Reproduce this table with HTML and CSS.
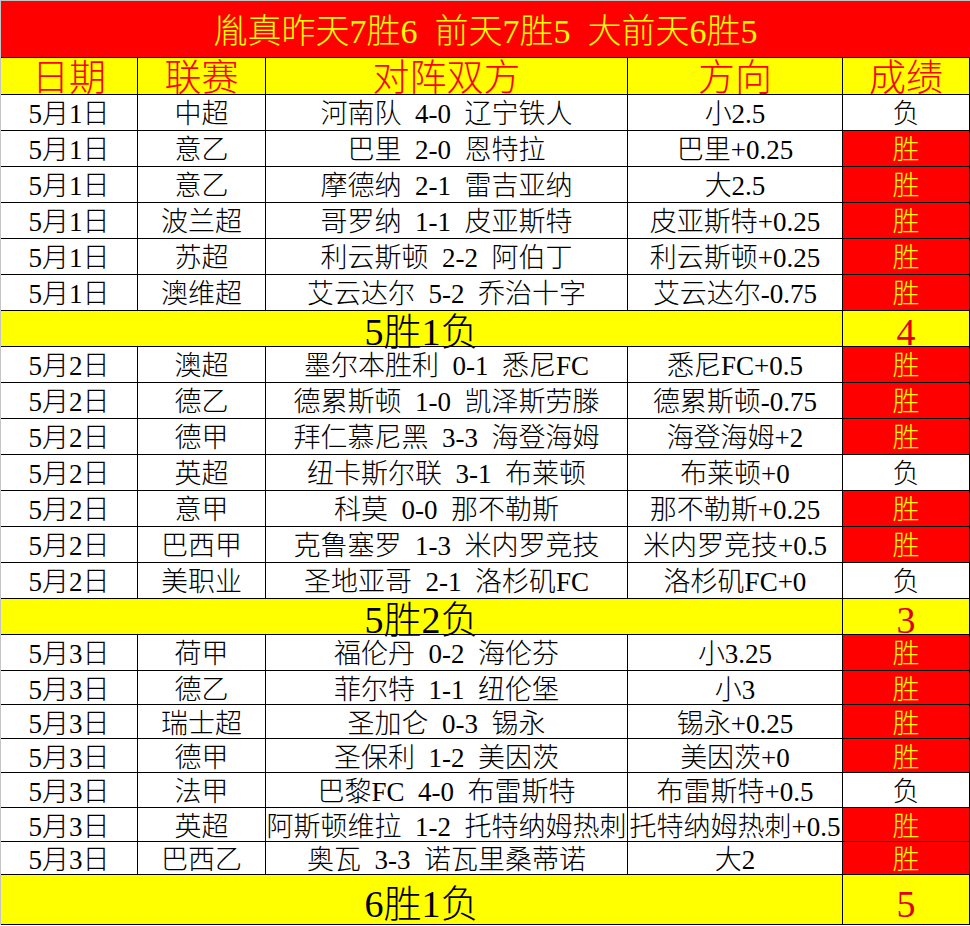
FILE: index.html
```html
<!DOCTYPE html>
<html lang="zh-CN">
<head>
<meta charset="utf-8">
<title>战绩</title>
<link rel="stylesheet" href="styles.css">
</head>
<body>
<div class="sheet">
  <div class="title">胤真昨天7胜6 前天7胜5 大前天6胜5</div>

  <div class="row head">
    <div class="cell">日期</div><div class="cell">联赛</div><div class="cell">对阵双方</div><div class="cell">方向</div><div class="cell">成绩</div>
  </div>

  <div class="row"><div class="cell">5月1日</div><div class="cell">中超</div><div class="cell">河南队 4-0 辽宁铁人</div><div class="cell">小2.5</div><div class="cell">负</div></div>
  <div class="row"><div class="cell">5月1日</div><div class="cell">意乙</div><div class="cell">巴里 2-0 恩特拉</div><div class="cell">巴里+0.25</div><div class="cell win">胜</div></div>
  <div class="row"><div class="cell">5月1日</div><div class="cell">意乙</div><div class="cell">摩德纳 2-1 雷吉亚纳</div><div class="cell">大2.5</div><div class="cell win">胜</div></div>
  <div class="row"><div class="cell">5月1日</div><div class="cell">波兰超</div><div class="cell">哥罗纳 1-1 皮亚斯特</div><div class="cell">皮亚斯特+0.25</div><div class="cell win">胜</div></div>
  <div class="row"><div class="cell">5月1日</div><div class="cell">苏超</div><div class="cell">利云斯顿 2-2 阿伯丁</div><div class="cell">利云斯顿+0.25</div><div class="cell win">胜</div></div>
  <div class="row"><div class="cell">5月1日</div><div class="cell">澳维超</div><div class="cell">艾云达尔 5-2 乔治十字</div><div class="cell">艾云达尔-0.75</div><div class="cell win">胜</div></div>
  <div class="row sum"><div class="cell span">5胜1负</div><div class="cell score">4</div></div>

  <div class="row"><div class="cell">5月2日</div><div class="cell">澳超</div><div class="cell">墨尔本胜利 0-1 悉尼FC</div><div class="cell">悉尼FC+0.5</div><div class="cell win">胜</div></div>
  <div class="row"><div class="cell">5月2日</div><div class="cell">德乙</div><div class="cell">德累斯顿 1-0 凯泽斯劳滕</div><div class="cell">德累斯顿-0.75</div><div class="cell win">胜</div></div>
  <div class="row"><div class="cell">5月2日</div><div class="cell">德甲</div><div class="cell">拜仁慕尼黑 3-3 海登海姆</div><div class="cell">海登海姆+2</div><div class="cell win">胜</div></div>
  <div class="row"><div class="cell">5月2日</div><div class="cell">英超</div><div class="cell">纽卡斯尔联 3-1 布莱顿</div><div class="cell">布莱顿+0</div><div class="cell">负</div></div>
  <div class="row"><div class="cell">5月2日</div><div class="cell">意甲</div><div class="cell">科莫 0-0 那不勒斯</div><div class="cell">那不勒斯+0.25</div><div class="cell win">胜</div></div>
  <div class="row"><div class="cell">5月2日</div><div class="cell">巴西甲</div><div class="cell">克鲁塞罗 1-3 米内罗竞技</div><div class="cell">米内罗竞技+0.5</div><div class="cell win">胜</div></div>
  <div class="row"><div class="cell">5月2日</div><div class="cell">美职业</div><div class="cell">圣地亚哥 2-1 洛杉矶FC</div><div class="cell">洛杉矶FC+0</div><div class="cell">负</div></div>
  <div class="row sum"><div class="cell span">5胜2负</div><div class="cell score">3</div></div>

  <div class="row"><div class="cell">5月3日</div><div class="cell">荷甲</div><div class="cell">福伦丹 0-2 海伦芬</div><div class="cell">小3.25</div><div class="cell win">胜</div></div>
  <div class="row h34"><div class="cell">5月3日</div><div class="cell">德乙</div><div class="cell">菲尔特 1-1 纽伦堡</div><div class="cell">小3</div><div class="cell win">胜</div></div>
  <div class="row h34"><div class="cell">5月3日</div><div class="cell">瑞士超</div><div class="cell">圣加仑 0-3 锡永</div><div class="cell">锡永+0.25</div><div class="cell win">胜</div></div>
  <div class="row h34"><div class="cell">5月3日</div><div class="cell">德甲</div><div class="cell">圣保利 1-2 美因茨</div><div class="cell">美因茨+0</div><div class="cell win">胜</div></div>
  <div class="row h35"><div class="cell">5月3日</div><div class="cell">法甲</div><div class="cell">巴黎FC 4-0 布雷斯特</div><div class="cell">布雷斯特+0.5</div><div class="cell">负</div></div>
  <div class="row h34"><div class="cell">5月3日</div><div class="cell">英超</div><div class="cell">阿斯顿维拉 1-2 托特纳姆热刺</div><div class="cell">托特纳姆热刺+0.5</div><div class="cell win">胜</div></div>
  <div class="row h33"><div class="cell">5月3日</div><div class="cell">巴西乙</div><div class="cell">奥瓦 3-3 诺瓦里桑蒂诺</div><div class="cell">大2</div><div class="cell win">胜</div></div>
  <div class="row sum last"><div class="cell span">6胜1负</div><div class="cell score">5</div></div>
</div>
</body>
</html>
```

FILE: styles.css
```css
* { box-sizing: border-box; }

html, body {
  margin: 0;
  padding: 0;
  background: #ffffff;
}

body {
  width: 970px;
  height: 926px;
  overflow: hidden;
  font-family: "Liberation Serif", "Noto Sans CJK SC", serif;
  color: #000000;
}

.sheet {
  width: 970px;
  border-top: 1px solid #c4c4c4;
  border-left: 1px solid #c4c4c4;
  display: flex;
  flex-direction: column;
}

.title {
  height: 57px;
  background: #ff0000;
  color: #ffff00;
  font-size: 34px;
  line-height: 34px;
  font-weight: 300;
  word-spacing: 0.25em;
  display: flex;
  align-items: flex-start;
  justify-content: center;
  padding-top: 14px;
  border-bottom: 1px solid #000000;
  white-space: nowrap;
}

.row {
  display: grid;
  grid-template-columns: 137px 128px 362px 215px 127px;
  height: 36px;
  border-bottom: 1px solid #000000;
}

.row.h34 { height: 34px; }
.row.h35 { height: 35px; }
.row.h33 { height: 33px; }

.cell {
  border-right: 1px solid #000000;
  display: flex;
  align-items: flex-start;
  justify-content: center;
  overflow: hidden;
  white-space: nowrap;
  font-size: 27px;
  line-height: 27px;
  padding-top: 6px;
  word-spacing: 0.25em;
  font-weight: 300;
}

.row.h33 .cell {
  padding-top: 5px;
}

.head {
  height: 37px;
  background: #ffff00;
}

.head .cell {
  color: #ff0000;
  font-size: 37px;
  line-height: 26px;
  padding-top: 8px;
  overflow: visible;
}

.win {
  background: #ff0000;
  color: #ffff00;
}

.sum {
  background: #ffff00;
}

.sum .cell {
  font-size: 38px;
  line-height: 26px;
  padding-top: 8px;
  overflow: visible;
}

.sum .span {
  grid-column: 1 / 5;
}

.sum .score {
  color: #e00000;
}

.sum.last {
  height: 50px;
}

.sum.last .cell {
  padding-top: 16px;
}
```
